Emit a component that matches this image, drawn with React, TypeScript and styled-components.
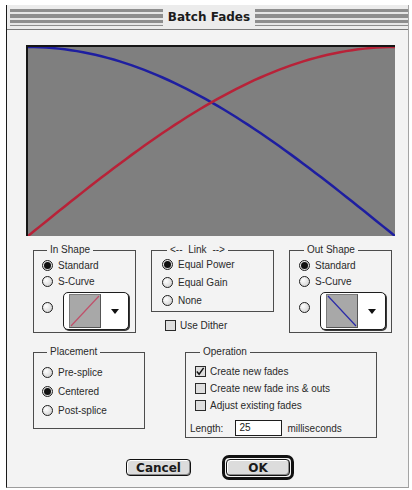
import React from 'react';
import styled, { createGlobalStyle } from 'styled-components';

const GlobalStyle = createGlobalStyle`
  html, body {
    margin: 0;
    padding: 0;
    background: #ffffff;
  }
  body {
    font-family: "Liberation Sans", Arial, sans-serif;
    color: #222;
  }
`;

const GRAPH_W = 367;
const GRAPH_H = 189;

const curvePath = (fn: (t: number) => number) => {
  const pts: string[] = [];
  for (let i = 0; i <= 60; i++) {
    const t = i / 60;
    const x = t * GRAPH_W;
    const y = (1 - fn(t)) * GRAPH_H;
    pts.push(`${i === 0 ? 'M' : 'L'}${x.toFixed(2)},${y.toFixed(2)}`);
  }
  return pts.join(' ');
};

const Radio = ({ on }: { on?: boolean }) => <RadioDot $on={on} />;

const Check = ({ on }: { on?: boolean }) => (
  <CheckBox>
    {on && (
      <svg width="11" height="11" viewBox="0 0 11 11">
        <path d="M2 5.5 L4.5 8.5 L9.5 1.5" stroke="#111" strokeWidth="1.6" fill="none" />
      </svg>
    )}
  </CheckBox>
);

const ShapePopup = ({ rising }: { rising?: boolean }) => (
  <PopupRow>
    <PopupRadio />
    <Popup>
      <Swatch>
        <svg width="30" height="32" viewBox="0 0 30 32">
          {rising ? (
            <line x1="1" y1="31" x2="29" y2="1" stroke="#c0506a" strokeWidth="1.2" />
          ) : (
            <line x1="1" y1="1" x2="29" y2="31" stroke="#2a2aa8" strokeWidth="1.2" />
          )}
        </svg>
      </Swatch>
      <Arrow />
    </Popup>
  </PopupRow>
);

export default function App() {
  return (
    <>
      <GlobalStyle />
      <Window>
        <TitleBar>
          <Stripes />
          <Title>Batch Fades</Title>
          <Stripes />
        </TitleBar>
        <Content>
          <Graph>
            <svg width={GRAPH_W} height={GRAPH_H} viewBox={`0 0 ${GRAPH_W} ${GRAPH_H}`}>
              <path
                d={curvePath((t) => Math.cos((t * Math.PI) / 2))}
                stroke="#1e1ea0"
                strokeWidth="2.5"
                fill="none"
              />
              <path
                d={curvePath((t) => Math.sin((t * Math.PI) / 2))}
                stroke="#b82238"
                strokeWidth="2.5"
                fill="none"
              />
            </svg>
          </Graph>

          <TopRow>
            <Group $w={103} $pad="2px 4px 2px 8px">
              <Legend>In Shape</Legend>
              <Row $h={16}>
                <Radio on />
                <Label>Standard</Label>
              </Row>
              <Row $h={16}>
                <Radio />
                <Label>S-Curve</Label>
              </Row>
              <ShapePopup rising />
            </Group>

            <LinkColumn>
              <Group $w={123} $pad="0 4px 2px 10px">
                <Legend $spaced>{'<-- Link -->'}</Legend>
                <Row $h={18}>
                  <Radio on />
                  <Label>Equal Power</Label>
                </Row>
                <Row $h={18}>
                  <Radio />
                  <Label>Equal Gain</Label>
                </Row>
                <Row $h={18}>
                  <Radio />
                  <Label>None</Label>
                </Row>
              </Group>
              <DitherRow>
                <Check />
                <Label>Use Dither</Label>
              </DitherRow>
            </LinkColumn>

            <Group $w={103} $pad="2px 4px 2px 9px">
              <Legend>Out Shape</Legend>
              <Row $h={16}>
                <Radio on />
                <Label>Standard</Label>
              </Row>
              <Row $h={16}>
                <Radio />
                <Label>S-Curve</Label>
              </Row>
              <ShapePopup />
            </Group>
          </TopRow>

          <BottomRow>
            <Group $w={112} $pad="6px 4px 8px 8px">
              <Legend>Placement</Legend>
              <Row $h={19}>
                <Radio />
                <Label>Pre-splice</Label>
              </Row>
              <Row $h={19}>
                <Radio on />
                <Label>Centered</Label>
              </Row>
              <Row $h={19}>
                <Radio />
                <Label>Post-splice</Label>
              </Row>
            </Group>

            <Group $w={192} $pad="6px 4px 1px 9px">
              <Legend>Operation</Legend>
              <Row $h={17} $gap={4}>
                <Check on />
                <Label>Create new fades</Label>
              </Row>
              <Row $h={17} $gap={4}>
                <Check />
                <Label>Create new fade ins &amp; outs</Label>
              </Row>
              <Row $h={17} $gap={4}>
                <Check />
                <Label>Adjust existing fades</Label>
              </Row>
              <LengthRow>
                <Label>Length:</Label>
                <LengthInput>25</LengthInput>
                <Label>milliseconds</Label>
              </LengthRow>
            </Group>
          </BottomRow>

          <ButtonRow>
            <Button>Cancel</Button>
            <DefaultRing>
              <Button $fill>OK</Button>
            </DefaultRing>
          </ButtonRow>
        </Content>
      </Window>
    </>
  );
}

const Window = styled.div`
  box-sizing: border-box;
  margin: 5px 0 0 6px;
  width: 403px;
  background: #f3f3f3;
  border-left: 1px solid #1a1a1a;
  border-right: 1px solid #a4a4a4;
  border-bottom: 1px solid #9c9c9c;
`;

const TitleBar = styled.div`
  display: flex;
  align-items: center;
  height: 24px;
  padding-left: 3px;
  background: #ececec;
  border-bottom: 1px solid #7a7a7a;
`;

const Stripes = styled.div`
  flex: 1;
  height: 17px;
  background: repeating-linear-gradient(
    to bottom,
    #8e8e8e 0px,
    #8e8e8e 3px,
    #e6e6e6 3px,
    #e6e6e6 5.5px
  );
`;

const Title = styled.span`
  padding: 0 5px;
  font-family: "DejaVu Sans", "Liberation Sans", sans-serif;
  font-weight: bold;
  font-size: 12px;
  color: #1c1c1c;
`;

const Content = styled.div`
  padding: 15px 0 7px 0;
`;

const Graph = styled.div`
  display: flex;
  margin-left: 19px;
  width: 369px;
  height: 191px;
  box-sizing: border-box;
  background: #7f7f7f;
  border-top: 2px solid #161616;
  border-left: 2px solid #161616;
`;

const TopRow = styled.div`
  display: flex;
  align-items: flex-start;
  gap: 15px;
  margin-top: 9px;
  padding-left: 26px;
`;

const BottomRow = styled.div`
  display: flex;
  align-items: flex-start;
  gap: 40px;
  margin-top: 14px;
  padding-left: 26px;
`;

const Group = styled.fieldset<{ $w: number; $pad: string }>`
  box-sizing: border-box;
  width: ${(p) => p.$w}px;
  min-width: 0;
  margin: 0;
  padding: ${(p) => p.$pad};
  border: 1px solid #4c4c4c;
  display: flex;
  flex-direction: column;
`;

const Legend = styled.legend<{ $spaced?: boolean }>`
  margin-left: 5px;
  padding: 0 3px;
  font-size: 10px;
  line-height: 10px;
  color: #2a2a2a;
  word-spacing: ${(p) => (p.$spaced ? '3px' : 'normal')};
`;

const Row = styled.div<{ $h: number; $gap?: number }>`
  display: flex;
  align-items: center;
  gap: ${(p) => p.$gap ?? 5}px;
  height: ${(p) => p.$h}px;
`;

const Label = styled.span`
  font-size: 10px;
  color: #2a2a2a;
  white-space: nowrap;
`;

const RadioDot = styled.span<{ $on?: boolean }>`
  box-sizing: border-box;
  flex: none;
  position: relative;
  width: 11px;
  height: 11px;
  border-radius: 50%;
  border: 1px solid #1e1e1e;
  background: radial-gradient(circle at 35% 35%, #ffffff 0%, #d4d4d4 80%);

  &::after {
    content: '';
    display: ${(p) => (p.$on ? 'block' : 'none')};
    position: absolute;
    left: 1px;
    top: 1px;
    width: 7px;
    height: 7px;
    border-radius: 50%;
    background: #111;
  }
`;

const PopupRadio = styled(RadioDot)`
  margin-bottom: 7px;
`;

const CheckBox = styled.span`
  box-sizing: border-box;
  flex: none;
  display: flex;
  width: 11px;
  height: 11px;
  border: 1px solid #2a2a2a;
  background: #dedede;

  svg {
    margin: -1px 0 0 -1px;
  }
`;

const PopupRow = styled.div`
  display: flex;
  align-items: center;
  gap: 10px;
  margin-top: 3px;
`;

const Popup = styled.div`
  box-sizing: border-box;
  display: flex;
  align-items: center;
  width: 66px;
  height: 38px;
  padding-left: 5px;
  border: 1px solid #1e1e1e;
  border-radius: 5px;
  background: #ffffff;
  box-shadow: 1px 1px 0 #3a3a3a;
`;

const Swatch = styled.div`
  box-sizing: border-box;
  display: flex;
  width: 32px;
  height: 34px;
  background: #a8a8a8;
  border: 1px solid #7a7a7a;
  border-right-color: #555;
  border-bottom-color: #555;
`;

const Arrow = styled.span`
  margin-left: 10px;
  width: 0;
  height: 0;
  border-left: 4px solid transparent;
  border-right: 4px solid transparent;
  border-top: 5px solid #111;
`;

const LinkColumn = styled.div`
  display: flex;
  flex-direction: column;
`;

const DitherRow = styled.div`
  display: flex;
  align-items: center;
  gap: 4px;
  margin: 8px 0 0 14px;
`;

const LengthRow = styled.div`
  display: flex;
  align-items: center;
  margin: 6px 0 0 -5px;

  & > span:first-child {
    margin-right: 12px;
  }
`;

const LengthInput = styled.div`
  box-sizing: border-box;
  width: 47px;
  height: 16px;
  margin-right: 5px;
  padding-left: 3px;
  border: 1px solid #1e1e1e;
  background: #ffffff;
  font-size: 10px;
  line-height: 14px;
`;

const ButtonRow = styled.div`
  display: flex;
  justify-content: center;
  align-items: center;
  gap: 31px;
  margin-top: 17px;
  padding-left: 5px;
`;

const Button = styled.div<{ $fill?: boolean }>`
  box-sizing: border-box;
  width: ${(p) => (p.$fill ? '100%' : '65px')};
  height: ${(p) => (p.$fill ? '100%' : '17px')};
  display: flex;
  align-items: center;
  justify-content: center;
  border: 1px solid #111;
  border-radius: 4px;
  background: #dcdcdc;
  box-shadow: inset -1px -1px 0 #8a8a8a, inset 1px 1px 0 #ffffff;
  font-family: "DejaVu Sans", "Liberation Sans", sans-serif;
  font-weight: bold;
  font-size: 12px;
  color: #1a1a1a;
`;

const DefaultRing = styled.div`
  box-sizing: border-box;
  width: 72px;
  height: 25px;
  padding: 1px;
  border: 3px solid #111;
  border-radius: 7px;
  background: #f3f3f3;
`;
